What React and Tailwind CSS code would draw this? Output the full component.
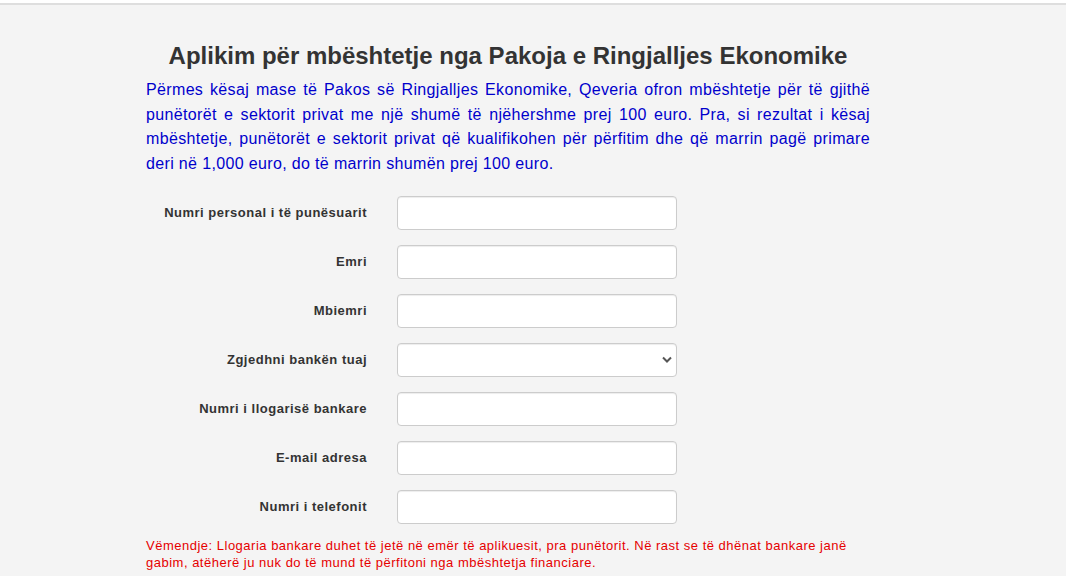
import React from 'react';

const fields = [
  { label: 'Numri personal i të punësuarit', type: 'text' },
  { label: 'Emri', type: 'text' },
  { label: 'Mbiemri', type: 'text' },
  { label: 'Zgjedhni bankën tuaj', type: 'select' },
  { label: 'Numri i llogarisë bankare', type: 'text' },
  { label: 'E-mail adresa', type: 'email' },
  { label: 'Numri i telefonit', type: 'tel' },
];

export default function App() {
  return (
    <div className="min-h-screen bg-[#f4f4f4] font-['Liberation_Sans',Arial,sans-serif] text-[#333]">
      {/* top strip */}
      <div className="h-[3px] bg-white" />
      <div className="h-[2px] bg-[#dedede]" />

      <div className="ml-[146px] w-[724px] pt-[36px]">
        <h1 className="text-center text-[24px] font-bold leading-[30px] text-[#333]">
          Aplikim për mbështetje nga Pakoja e Ringjalljes Ekonomike
        </h1>
        <p className="mt-[7px] text-justify text-[16px] leading-[24.5px] tracking-[0.35px] text-[#0000cc]">
          Përmes kësaj mase të Pakos së Ringjalljes Ekonomike, Qeveria ofron mbështetje për të gjithë
          punëtorët e sektorit privat me një shumë të njëhershme prej 100 euro. Pra, si rezultat i kësaj
          mbështetje, punëtorët e sektorit privat që kualifikohen për përfitim dhe që marrin pagë primare
          deri në 1,000 euro, do të marrin shumën prej 100 euro.
        </p>

        <form className="mt-[20px] flex flex-col gap-[15px]">
          {fields.map((f) => (
            <div key={f.label} className="flex items-center">
              <label className="w-[221px] text-right text-[13px] font-bold tracking-[0.5px]">{f.label}</label>
              <div className="ml-[30px] w-[280px]">
                {f.type === 'select' ? (
                  <div className="relative">
                    <select className="h-[34px] w-full appearance-none rounded-[4px] border border-[#ccc] bg-white px-3 text-[14px] shadow-[inset_0_1px_1px_rgba(0,0,0,0.075)] outline-none">
                      <option></option>
                    </select>
                    <svg
                      className="pointer-events-none absolute right-[4px] top-[13px]"
                      width="12"
                      height="8"
                      viewBox="0 0 12 8"
                    >
                      <path d="M2 1.5 L6 5.5 L10 1.5" fill="none" stroke="#555" strokeWidth="2" />
                    </svg>
                  </div>
                ) : (
                  <input
                    type={f.type}
                    className="h-[34px] w-full rounded-[4px] border border-[#ccc] bg-white px-3 text-[14px] shadow-[inset_0_1px_1px_rgba(0,0,0,0.075)] outline-none"
                  />
                )}
              </div>
            </div>
          ))}
        </form>

        <p className="mt-[14px] text-[13px] leading-[16.5px] tracking-[0.5px] text-[#e60000]">
          Vëmendje: Llogaria bankare duhet të jetë në emër të aplikuesit, pra punëtorit. Në rast se të dhënat bankare janë
          gabim, atëherë ju nuk do të mund të përfitoni nga mbështetja financiare.
        </p>
      </div>
    </div>
  );
}
